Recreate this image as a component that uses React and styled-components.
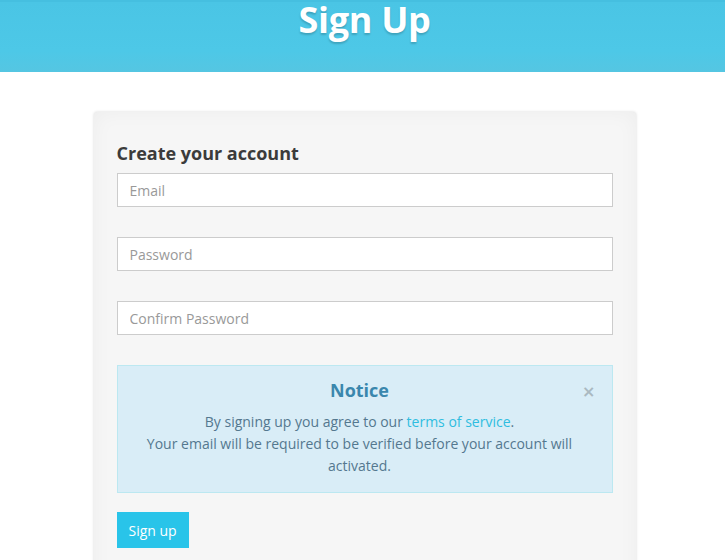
import React from "react";
import styled, { createGlobalStyle } from "styled-components";

const Global = createGlobalStyle`
  html, body { margin: 0; padding: 0; background: #fff; }
  body { font-family: "Open Sans", "Noto Sans", sans-serif; color: #333; }
  * { box-sizing: border-box; }
`;

const Header = styled.header`
  height: 72px;
  background: linear-gradient(180deg, #4ac5e5 0%, #4dc8e7 70%, #55c6e2 100%);
  border-top: 2px solid #45bfe0;
  display: flex;
  justify-content: center;
  align-items: flex-start;
`;

const Title = styled.h1`
  margin: 0 0 0 4px;
  font-size: 36px;
  line-height: 36px;
  font-weight: 700;
  color: #fff;
  text-shadow: 0 2px 2px rgba(0, 0, 0, 0.18);
  letter-spacing: -0.3px;
`;

const Main = styled.main`
  padding-top: 40px;
  display: flex;
  justify-content: center;
`;

const Card = styled.section`
  width: 542px;
  margin-left: 4px;
  background: #f6f6f6;
  border-radius: 3px;
  padding: 28px 23px 40px;
  box-shadow: 0 0 3px rgba(0, 0, 0, 0.16), inset 0 0 20px rgba(0, 0, 0, 0.04);
`;

const Heading = styled.h3`
  margin: 0 0 7px;
  font-size: 18px;
  line-height: 26px;
  font-weight: 700;
  color: #3b3b3b;
`;

const Input = styled.input`
  display: block;
  width: 100%;
  height: 34px;
  margin: 0 0 30px;
  padding: 0 12px;
  border: 1px solid #cccccc;
  border-radius: 0;
  background: #fff;
  font-family: inherit;
  font-size: 14px;
  color: #555;
  &::placeholder { color: #999; }
  &:focus { outline: none; }
`;

const Notice = styled.div`
  position: relative;
  background: #d9edf7;
  border: 1px solid #bce8f1;
  padding: 11px 20px 15px 10px;
  text-align: center;
`;

const NoticeTitle = styled.h4`
  margin: 0 0 8px;
  font-size: 18px;
  line-height: 26px;
  font-weight: 700;
  color: #3a87ad;
`;

const NoticeText = styled.p`
  margin: 0;
  font-size: 14px;
  line-height: 22px;
  color: #54788f;
`;

const Link = styled.a`
  color: #2fbde0;
  text-decoration: none;
`;

const Close = styled.span`
  position: absolute;
  right: 16px;
  top: 14px;
  font-size: 16px;
  line-height: 24px;
  font-weight: 700;
  color: #aab9c1;
  font-family: "DejaVu Sans", sans-serif;
`;

const Button = styled.button`
  margin-top: 19px;
  height: 36px;
  padding: 0 12px;
  border: none;
  border-radius: 0;
  background: #29c4e9;
  color: #fff;
  font-family: inherit;
  font-size: 14px;
`;

export default function App() {
  return (
    <>
      <Global />
      <Header>
        <Title>Sign Up</Title>
      </Header>
      <Main>
        <Card>
          <Heading>Create your account</Heading>
          <Input placeholder="Email" />
          <Input placeholder="Password" type="password" />
          <Input placeholder="Confirm Password" type="password" />
          <Notice>
            <Close>×</Close>
            <NoticeTitle>Notice</NoticeTitle>
            <NoticeText>
              By signing up you agree to our <Link href="#">terms of service</Link>.
              <br />
              Your email will be required to be verified before your account will activated.
            </NoticeText>
          </Notice>
          <Button>Sign up</Button>
        </Card>
      </Main>
    </>
  );
}
